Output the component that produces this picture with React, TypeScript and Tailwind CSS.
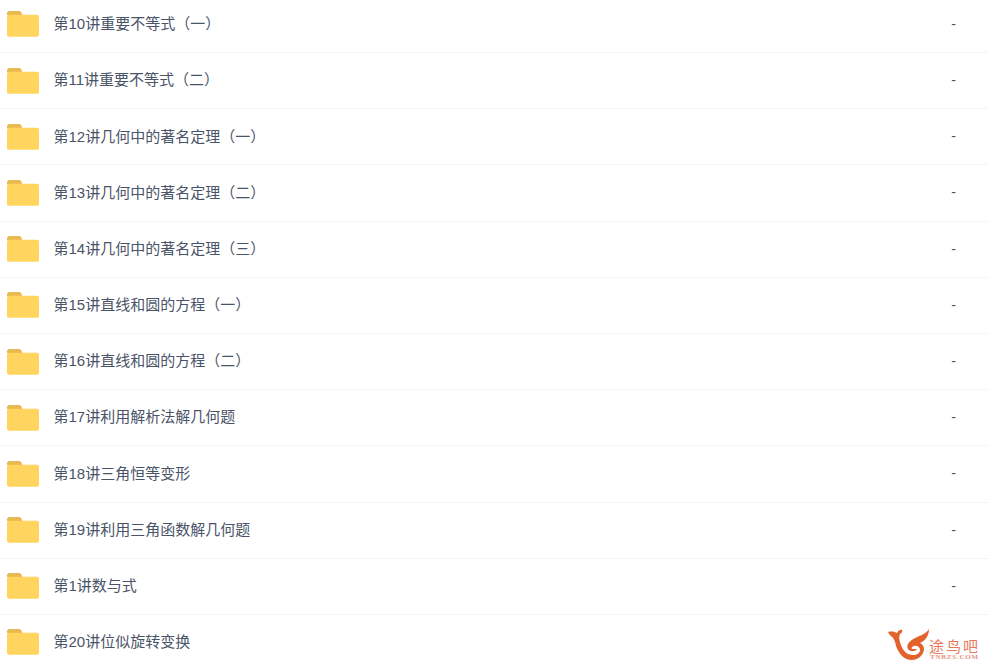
const rows = [
  '第10讲重要不等式（一）',
  '第11讲重要不等式（二）',
  '第12讲几何中的著名定理（一）',
  '第13讲几何中的著名定理（二）',
  '第14讲几何中的著名定理（三）',
  '第15讲直线和圆的方程（一）',
  '第16讲直线和圆的方程（二）',
  '第17讲利用解析法解几何题',
  '第18讲三角恒等变形',
  '第19讲利用三角函数解几何题',
  '第1讲数与式',
  '第20讲位似旋转变换',
]

const Folder = () => (
  <svg width="32" height="26" viewBox="0 0 32 26" className="shrink-0">
    <path d="M0 2.5C0 1.1 1.1 0 2.5 0h9.2c1.2 0 2.2.7 2.8 1.7L15.2 4H0z" fill="#e8b94f" />
    <rect x="0" y="3.8" width="32" height="22" rx="2" fill="#ffd45f" />
  </svg>
)

const Logo = () => (
  <div className="absolute left-[888px] top-[628px] flex items-start">
    <svg width="42" height="32" viewBox="0 0 42 32" className="shrink-0">
      <path d="M0 4C4 3 7 4 9 5 10 3 12 1 14 2 15 3 14 5 12 6 11 8 11 12 13 17 15 23 19 27 25 27 29 27 32 25 32 22 32 19 29 17 26 18 24 18.500 23 20 24 21L29 21C27 24 22 24 20 21 18 17 21 13 27 10 33 7 38 6 41 1 41 8 37 13 32 15 36 17 37 21 35 25 33 29 29 32 24 32 16 32 11 26 8 18 7 13 6 10 3 8 2 7 1 6 0 4Z" fill="#e2622c" />
    </svg>
    <div className="-ml-[1px] mt-[10px] flex w-[51px] flex-col items-center whitespace-nowrap">
      <span className="text-[15px] leading-[15px] tracking-[2px] text-[#e8795a] font-['Noto_Sans_CJK_SC',sans-serif]">途鸟吧</span>
      <span className="text-[7px] leading-[8px] font-bold tracking-[0.8px] text-[#e8917a] font-['Liberation_Serif',serif]">TNBZS.COM</span>
    </div>
  </div>
)

export default function App() {
  return (
    <div className="relative h-[665px] w-[989px] overflow-hidden bg-white font-['Liberation_Sans','Noto_Sans_CJK_SC',sans-serif]">
      <div className="-mt-[3.2px] flex flex-col">
        {rows.map((name, i) => (
          <div key={name} className="flex h-[56.2px] shrink-0 items-center border-b border-[#f5f5f6] pl-[7px]">
            <Folder />
            <span className="ml-[14.5px] text-[15px] text-[#4a5468]">{name}</span>
            {i < rows.length - 1 && <span className="ml-auto mr-[33px] text-[14px] text-[#4a5468]">-</span>}
          </div>
        ))}
      </div>
      <Logo />
    </div>
  )
}
